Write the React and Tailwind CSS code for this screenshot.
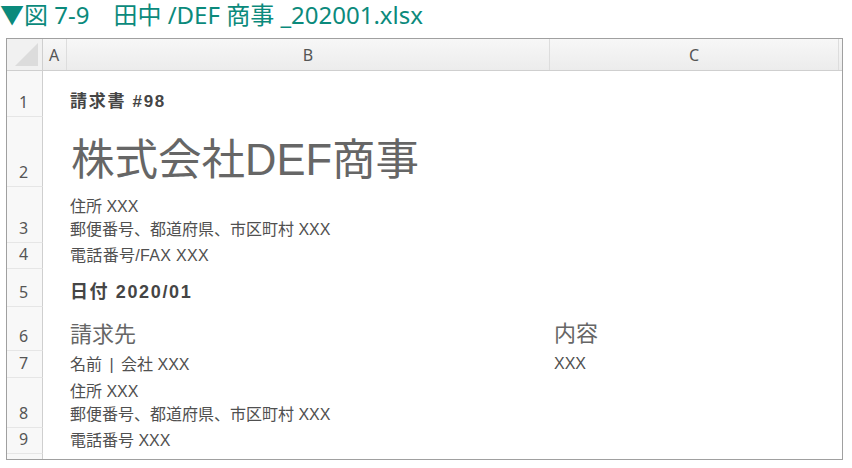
import React from "react";

const BASE = { fontFamily: '"Liberation Sans", "Noto Sans CJK JP", sans-serif' };
const NUM = { fontFamily: '"Noto Sans", "Noto Sans CJK JP", sans-serif' };

const SM = "text-[16px] text-[#505050] leading-[23px]";

const rows = [
  { n: "1", h: 46, b: [{ t: "請求書 #98", cls: "text-[17px] font-bold tracking-[0.1em] text-[#454545] leading-[26px]" }] },
  { n: "2", h: 70, b: [{ t: "株式会社DEF商事", cls: "text-[43.5px] text-[#666666] leading-[52px] pl-[1px]" }], pb: 1 },
  {
    n: "3",
    h: 56,
    b: [
      { t: "住所 XXX", cls: SM },
      { t: "郵便番号、都道府県、市区町村 XXX", cls: SM },
    ],
  },
  { n: "4", h: 26, b: [{ t: "電話番号/FAX XXX", cls: SM + " tracking-[0.02em]" }] },
  { n: "5", h: 38, b: [{ t: "日付 2020/01", cls: "text-[18px] font-bold tracking-[0.09em] text-[#454545] leading-[26px]" }] },
  {
    n: "6",
    h: 44,
    b: [{ t: "請求先", cls: "text-[22px] text-[#666666] leading-[28px]" }],
    c: [{ t: "内容", cls: "text-[22px] text-[#666666] leading-[32px]" }],
  },
  {
    n: "7",
    h: 27,
    b: [
      {
        t: (
          <>
            名前 <span className="mx-[3px]">|</span> 会社 XXX
          </>
        ),
        cls: SM,
      },
    ],
    c: [{ t: "XXX", cls: "text-[16px] text-[#505050] leading-[26px]" }],
  },
  {
    n: "8",
    h: 50,
    b: [
      { t: "住所 XXX", cls: SM },
      { t: "郵便番号、都道府県、市区町村 XXX", cls: SM },
    ],
  },
  { n: "9", h: 26, b: [{ t: "電話番号 XXX", cls: SM }] },
];

function Lines({ items }) {
  return (
    <>
      {(items || []).map((l, i) => (
        <div key={i} className={"whitespace-nowrap " + l.cls}>
          {l.t}
        </div>
      ))}
    </>
  );
}

export default function App() {
  return (
    <div className="w-[852px] h-[468px] bg-white overflow-hidden" style={BASE}>
      <div className="h-[38px] pt-[1px] text-[24px] leading-[28px] text-[#0b8a7c] whitespace-nowrap" style={NUM}>
        ▼図 7-9　田中 /DEF 商事 _202001.xlsx
      </div>
      <div className="ml-[6px] w-[837px] h-[422px] border border-[#a0a0a0] flex flex-col overflow-hidden">
        <div
          className="flex h-[32px] shrink-0 border-b border-[#cfcfcf] bg-gradient-to-b from-[#f7f7f7] to-[#ececec]"
          style={NUM}
        >
          <div className="w-[36px] shrink-0 border-r border-[#cfcfcf] relative bg-[#f1f1f1]">
            <svg className="absolute left-0 top-0" width="35" height="31" viewBox="0 0 35 31">
              <polygon points="8,27 31,4 31,27" fill="#dcdcdc" />
            </svg>
          </div>
          <div className="w-[24px] shrink-0 border-r border-[#dddddd] flex items-center pl-[6px] text-[16px] text-[#555]">
            A
          </div>
          <div className="w-[483px] shrink-0 border-r border-[#dddddd] flex items-center justify-center text-[16px] text-[#555]">
            B
          </div>
          <div className="w-[289px] shrink-0 border-r border-[#dddddd] flex items-center justify-center text-[16px] text-[#555]">
            C
          </div>
          <div className="flex-1" />
        </div>
        {rows.map((r) => (
          <div key={r.n} className="flex shrink-0" style={{ height: r.h }}>
            <div
              className="w-[36px] shrink-0 border-r border-b border-r-[#cfcfcf] border-b-[#e6e6e6] bg-[#f8f8f8] flex items-end pl-[12px] pb-[1px] text-[16px] leading-[26px] text-[#555]"
              style={NUM}
            >
              {r.n}
            </div>
            <div className="w-[24px] shrink-0" />
            <div
              className="w-[483px] shrink-0 flex flex-col justify-end pl-[3px]"
              style={{ paddingBottom: r.pb ?? 2 }}
            >
              <Lines items={r.b} />
            </div>
            <div className="w-[289px] shrink-0 flex flex-col justify-end pl-[4px] pb-[1px]">
              <Lines items={r.c} />
            </div>
          </div>
        ))}
        <div className="flex flex-1">
          <div className="w-[36px] shrink-0 border-r border-[#cfcfcf] bg-[#f8f8f8]" />
        </div>
      </div>
    </div>
  );
}
